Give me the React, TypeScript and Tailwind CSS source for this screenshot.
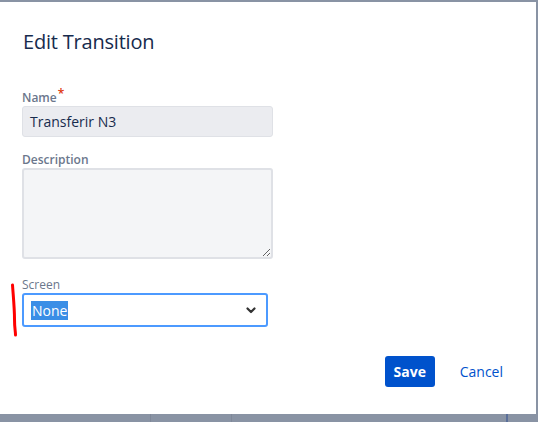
import React from 'react';

const FONT = { fontFamily: '"Open Sans", "Noto Sans", "Liberation Sans", sans-serif' };

export default function App() {
  return (
    <div className="w-[538px] h-[422px] bg-[#8993a4] flex flex-col overflow-hidden" style={FONT}>
      <div className="relative mt-[2px] h-[412px] w-[536px] bg-white px-[22px] pt-[28px]">
        <h1 className="pl-[1px] text-[20px] leading-6 text-[#172b4d] font-normal tracking-[-0.2px]">Edit Transition</h1>

        <form className="mt-[36px] w-[251px] flex flex-col">
          <label className="text-[12px] leading-4 font-semibold text-[#6b778c]">
            Name<span className="relative -top-[4px] ml-[1px] text-[#de350b]">*</span>
          </label>
          <div className="h-[31px] rounded-[3px] border border-[#dfe1e6] bg-[#ebecf0] px-[7px] flex items-center text-[14px] text-[#172b4d]">
            Transferir N3
          </div>

          <label className="mt-[15px] text-[12px] leading-4 font-semibold text-[#6b778c]">Description</label>
          <textarea className="h-[91px] rounded-[3px] border-2 border-[#dfe1e6] bg-[#f4f5f7] outline-none" />

          <label className="mt-[18px] text-[12px] leading-4 font-normal text-[#6b778c]">Screen</label>
          <div className="w-[246px] h-[34px] rounded-[3px] border-2 border-[#4c9aff] bg-white pl-[7px] pr-[10px] flex items-center justify-between">
            <span className="bg-[#3a8ee6] text-white text-[14px] leading-[19px] px-[1px]">None</span>
            <svg width="10" height="7" viewBox="0 0 10 7">
              <path d="M1.5 1.5 L5 5 L8.5 1.5" fill="none" stroke="#333" strokeWidth="2.2" strokeLinecap="round" strokeLinejoin="round" />
            </svg>
          </div>
        </form>

        <div className="mt-[29px] mr-[1px] flex items-center justify-end gap-[15px]">
          <button className="h-[31px] w-[50px] rounded-[3px] bg-[#0052cc] text-white text-[14px] font-bold">Save</button>
          <button className="h-[31px] px-[10px] text-[14px] text-[#0052cc]">Cancel</button>
        </div>

        <svg className="absolute left-[10px] top-[281px]" width="10" height="56" viewBox="0 0 10 56">
          <path d="M2.5 2 C3.5 16, 4.5 26, 4.5 36 S5.5 48, 5.5 52" fill="none" stroke="#ff0000" strokeWidth="3" strokeLinecap="round" />
        </svg>
      </div>
      <div className="flex-1 flex">
        <div className="w-[151px] border-r border-[#7f8899]" />
        <div className="w-[81px] border-r border-[#7f8899]" />
        <div className="flex-1 border-r-2 border-[#5a6f9a] mr-[30px]" />
      </div>
    </div>
  );
}
